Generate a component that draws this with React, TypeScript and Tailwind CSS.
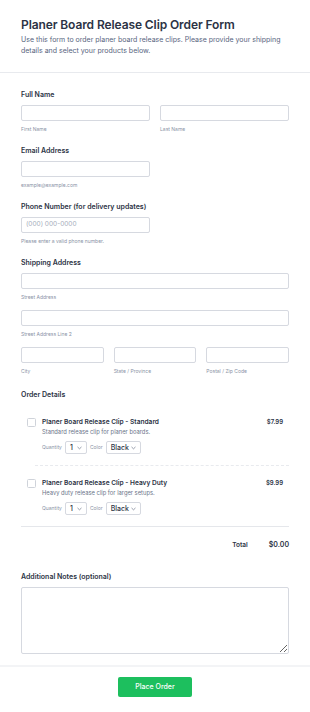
import React from "react";

const Chevron = () => (
  <svg width="5" height="4" viewBox="0 0 5 4" fill="none" className="shrink-0">
    <path d="M0.8 1.2l1.7 1.6 1.7-1.6" stroke="#7b8394" strokeWidth="0.8" strokeLinecap="round" strokeLinejoin="round" />
  </svg>
);

const Label = ({ children }: { children: React.ReactNode }) => (
  <div className="text-[7px] leading-[10px] font-semibold text-[#2c3345]">{children}</div>
);

const Input = ({ className = "", placeholder }: { className?: string; placeholder?: string }) => (
  <div className={`h-[16px] rounded-[2px] border border-[#d6d9e0] bg-white flex items-center px-[4px] ${className}`}>
    {placeholder && <span className="text-[6.5px] text-[#a6adbb]">{placeholder}</span>}
  </div>
);

const Sub = ({ children }: { children: React.ReactNode }) => (
  <div className="mt-[4px] text-[5px] leading-[8px] text-[#8a93a6]">{children}</div>
);

const Select = ({ value, w }: { value: string; w: string }) => (
  <div className={`${w} h-[13px] rounded-[2px] border border-[#d6d9e0] flex items-center justify-between pl-[4px] pr-[4px]`}>
    <span className="text-[7px] leading-none text-[#2c3345] font-medium">{value}</span>
    <Chevron />
  </div>
);

const Item = ({ title, desc, price }: { title: string; desc: string; price: string }) => (
  <div className="flex pl-[6px] pr-[6px] pt-[12px] pb-[11px]">
    <div className="w-[9px] h-[9px] mt-[1px] rounded-[1.5px] border border-[#cfd3da] bg-white shrink-0" />
    <div className="ml-[6px] flex-1">
      <div className="text-[6.6px] leading-[10px] font-semibold text-[#2c3345]">{title}</div>
      <div className="text-[5.8px] leading-[10px] text-[#6b7489]">{desc}</div>
      <div className="mt-[4px] flex items-center">
        <span className="text-[5px] text-[#8a93a6] mr-[3px]">Quantity</span>
        <Select value="1" w="w-[22px]" />
        <span className="text-[5px] text-[#8a93a6] ml-[3px] mr-[3px]">Color</span>
        <Select value="Black" w="w-[35px]" />
      </div>
    </div>
    <div className="text-[6px] leading-[10px] font-semibold text-[#2c3345]">{price}</div>
  </div>
);

export default function App() {
  return (
    <div className="w-[310px] min-h-[712px] bg-white font-['Inter',sans-serif]">
      <div className="px-[21px] pt-[17px] pb-[16px] border-b border-[#e8eaee]">
        <h1 className="text-[12px] leading-[16px] font-semibold text-[#2c3345] tracking-[-0.1px]">
          Planer Board Release Clip Order Form
        </h1>
        <p className="mt-[2px] text-[7px] leading-[10.5px] text-[#57647e]">
          Use this form to order planer board release clips. Please provide your shipping details and select your products below.
        </p>
      </div>

      <div className="px-[18px] pt-[17px]">
        <div className="px-[3px]">
          <Label>Full Name</Label>
          <div className="mt-[5px] grid grid-cols-2 gap-[10px]">
            <div>
              <Input />
              <Sub>First Name</Sub>
            </div>
            <div>
              <Input />
              <Sub>Last Name</Sub>
            </div>
          </div>

          <div className="mt-[13px]">
            <Label>Email Address</Label>
            <Input className="mt-[5px] w-[129px]" />
            <Sub>example@example.com</Sub>
          </div>

          <div className="mt-[13px]">
            <Label>Phone Number (for delivery updates)</Label>
            <Input className="mt-[5px] w-[129px]" placeholder="(000) 000-0000" />
            <Sub>Please enter a valid phone number.</Sub>
          </div>

          <div className="mt-[13px]">
            <Label>Shipping Address</Label>
            <Input className="mt-[5px]" />
            <Sub>Street Address</Sub>
            <Input className="mt-[9px]" />
            <Sub>Street Address Line 2</Sub>
            <div className="mt-[9px] grid grid-cols-3 gap-[10px]">
              <div>
                <Input />
                <Sub>City</Sub>
              </div>
              <div>
                <Input />
                <Sub>State / Province</Sub>
              </div>
              <div>
                <Input />
                <Sub>Postal / Zip Code</Sub>
              </div>
            </div>
          </div>

          <div className="mt-[15px]">
            <Label>Order Details</Label>
            <div className="mt-[5px] border-b border-[#e5e7eb]">
              <Item title="Planer Board Release Clip - Standard" desc="Standard release clip for planer boards." price="$7.99" />
              <div className="ml-[14px] border-t border-dashed border-[#e8eaee]" />
              <Item title="Planer Board Release Clip - Heavy Duty" desc="Heavy duty release clip for larger setups." price="$9.99" />
            </div>
            <div className="flex justify-end items-center pt-[13px] text-[6.5px] leading-[10px] font-semibold text-[#2c3345]">
              <span>Total</span>
              <span className="ml-[21px] text-[7px]">$0.00</span>
            </div>
          </div>

          <div className="mt-[22px]">
            <Label>Additional Notes (optional)</Label>
            <textarea className="mt-[5px] block w-full h-[67px] rounded-[2px] border border-[#d6d9e0] outline-none resize-y" />
          </div>
        </div>
      </div>

      <div className="mt-[11px] border-t-2 border-[#f3f4f6] flex justify-center pt-[10px] pb-[17px]">
        <button className="w-[74px] h-[20px] rounded-[2px] bg-[#1dbf5e] text-white text-[7px] font-medium">
          Place Order
        </button>
      </div>
    </div>
  );
}
